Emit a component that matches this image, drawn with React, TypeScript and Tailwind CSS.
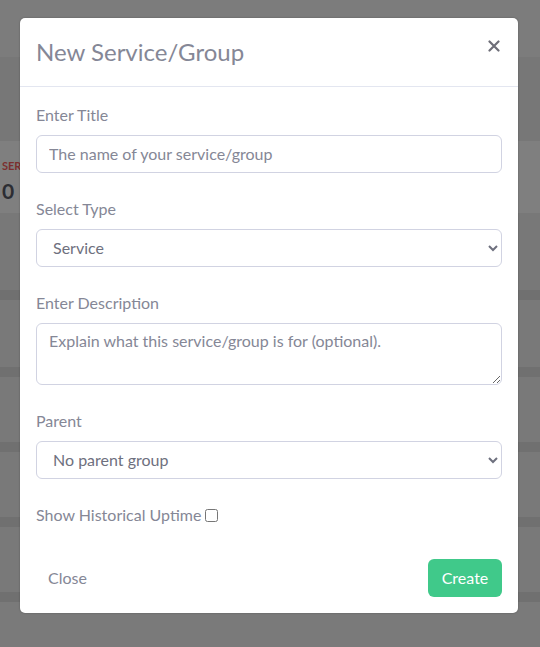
import React from 'react'

const font = { fontFamily: 'Lato, "Noto Sans", sans-serif' }

function Backdrop() {
  return (
    <div className="flex flex-col h-full">
      <div className="h-[57px] shrink-0 bg-[#7c7c7c]" />
      <div className="h-[84px] shrink-0 bg-[#777777]" />
      <div className="h-[72px] shrink-0 bg-[#7f7f7f] pl-[2px] pt-[18px]">
        <div className="text-[11px] font-bold text-[#7c2f2f] leading-[14px]">SERVICES</div>
        <div className="text-[21px] font-bold text-[#2c2d33] leading-[24px] mt-[6px]">0</div>
      </div>
      <div className="h-[77px] shrink-0 bg-[#787878]" />
      {[67, 65, 65, 65].map((h, i) => (
        <div key={i} className="flex flex-col shrink-0">
          <div className="h-[10px] bg-[#707070]" />
          <div className="bg-[#797979]" style={{ height: h }} />
        </div>
      ))}
      <div className="h-[10px] shrink-0 bg-[#707070]" />
      <div className="flex-1 bg-[#7a7a7a]" />
    </div>
  )
}

function Field({ label, children }: { label: string; children: React.ReactNode }) {
  return (
    <div className="mb-6">
      <label className="block mb-2 text-[16px] leading-[23px] pb-px text-[#858796]">{label}</label>
      {children}
    </div>
  )
}

const control =
  'block w-full h-[38px] px-3 pb-px rounded-[6px] border border-[#d1d3e2] bg-white text-[16px] text-[#6e707e] outline-none'

export default function App() {
  return (
    <div className="relative w-[540px] h-[647px] overflow-hidden" style={font}>
      <Backdrop />
      <div className="absolute inset-0 pt-[18px] pl-[20px]">
        <div className="w-[498px] bg-white rounded-[5px] shadow-[0_0_2px_rgba(0,0,0,0.3)]">
          <div className="flex items-start justify-between px-4 py-4 border-b border-[#e3e6f0]">
            <h4 className="text-[24px] leading-9 text-[#858796]">New Service/Group</h4>
            <button className="mt-[6px] mr-[2px] text-[#6e6e78]">
              <svg width="12" height="12" viewBox="0 0 12 12" stroke="currentColor" strokeWidth="2.2" strokeLinecap="round">
                <path d="M1.5 1.5 L10.5 10.5 M10.5 1.5 L1.5 10.5" />
              </svg>
            </button>
          </div>
          <div className="p-4">
            <Field label="Enter Title">
              <input
                className={control + ' placeholder:text-[#858796]'}
                placeholder="The name of your service/group"
              />
            </Field>
            <Field label="Select Type">
              <select className={control} defaultValue="service">
                <option value="service">Service</option>
                <option value="group">Group</option>
              </select>
            </Field>
            <Field label="Enter Description">
              <textarea
                rows={2}
                className="block w-full h-[62px] px-3 pt-[5px] pb-[7px] rounded-[6px] border border-[#d1d3e2] bg-white text-[16px] leading-6 text-[#6e707e] placeholder:text-[#858796] outline-none"
                placeholder="Explain what this service/group is for (optional)."
              />
            </Field>
            <Field label="Parent">
              <select className={control} defaultValue="">
                <option value="">No parent group</option>
              </select>
            </Field>
            <div className="flex items-center h-6 text-[16px] text-[#858796]">
              <span className="leading-[23px] pb-px">Show Historical Uptime</span>
              <input type="checkbox" className="ml-[4px] w-[13px] h-[13px]" />
            </div>
          </div>
          <div className="flex items-center justify-between p-4">
            <button className="h-[38px] px-3 pb-px text-[16px] text-[#858796]">Close</button>
            <button className="h-[38px] w-[74px] pb-px flex items-center justify-center rounded-[6px] bg-[#40c98a] text-[16px] text-white">
              Create
            </button>
          </div>
        </div>
      </div>
    </div>
  )
}
